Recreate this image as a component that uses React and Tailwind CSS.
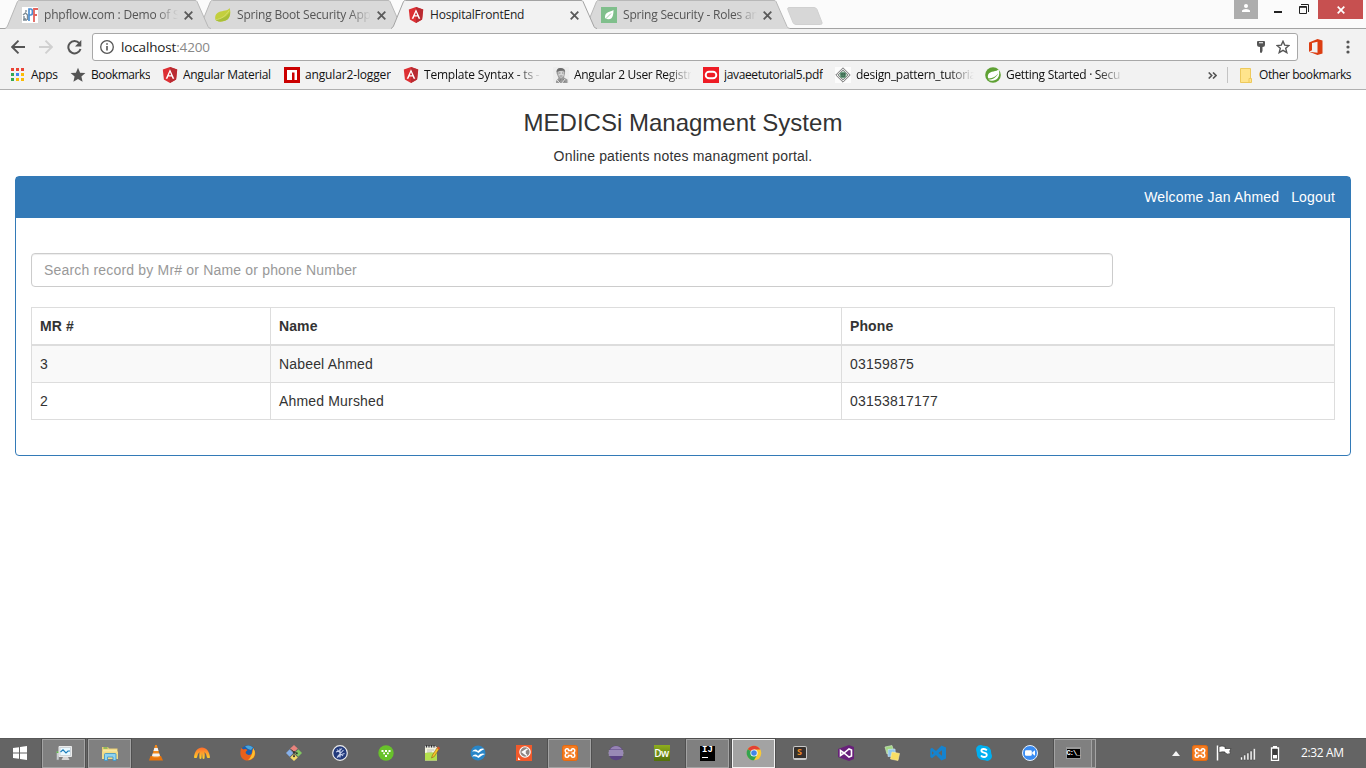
const UI = "font-['Open_Sans','Noto_Sans',sans-serif]";

function Svg({ children, className = "", size = "h-4 w-4", box = "0 0 16 16" }) {
  return (
    <svg viewBox={box} className={"block shrink-0 " + size + " " + className}>
      {children}
    </svg>
  );
}

/* ---------- favicons and browser glyphs ---------- */

const Angular = () => (
  <Svg>
    <path d="M8 0 15.2 2.6 14.1 12.4 8 16 1.9 12.4.8 2.6Z" fill="#dd2f33" />
    <path d="M8 0 15.2 2.6 14.1 12.4 8 16Z" fill="#b92b32" />
    <path d="M8 2.2 3.7 11.8h1.7l.9-2.2h3.4l.9 2.2h1.7ZM8 5.2l1.2 3H6.8Z" fill="#fff" fillRule="evenodd" />
  </Svg>
);

const PhpFlow = () => (
  <Svg>
    <rect width="16" height="16" fill="#fff" />
    <path d="M1 8l2.5-2 2 2v5M2 9v3h2M4 5V3M1 13h4" stroke="#7d8c96" strokeWidth="1.4" fill="none" />
    <path d="M7 14V2h1.800q1.700 0 1.700 3t-1.700 3H7" stroke="#4d8fd0" strokeWidth="1.700" fill="none" />
    <path d="M12 15V2h4M12 8h3" stroke="#e2625c" strokeWidth="1.800" fill="none" />
  </Svg>
);

const Leaf = () => (
  <Svg>
    <path d="M14.500 1C13 4 8 3.500 4 5 1 6.200-.5 9 .4 12.500 2 15 7 15.300 10.500 13.500 15 11.500 16.500 6 14.500 1Z" fill="#c3cf3d" />
    <path d="M.3 12.500C5 12 11 11 14.800 5 15.500 10 13 12.800 10 13.800 6 15.200 2 14.800.3 12.500Z" fill="#a9bf38" />
    <path d="M.5 12.800C6 12 11 9 14 3.500" stroke="#e3e98b" strokeWidth=".6" fill="none" />
  </Svg>
);

const GreenLeaf = () => (
  <Svg>
    <rect width="16" height="16" fill="#80bf8c" />
    <path d="M12.500 3C9 5 4.500 5 4 9.500q-.2 1.500.6 2.300Q11 13.500 12 8q.5-2.500.5-5Z" fill="#fff" />
    <path d="M3.500 13 10 6.500" stroke="#80bf8c" strokeWidth=".8" />
  </Svg>
);

const AppsGrid = () => (
  <Svg>
    {["#ea4335", "#ea4335", "#ea4335", "#34a853", "#4285f4", "#fbbc05", "#34a853", "#fbbc05", "#fbbc05"].map((c, i) => (
      <rect key={i} x={2 + (i % 3) * 5} y={1 + Math.floor(i / 3) * 5} width="3" height="3" fill={c} />
    ))}
  </Svg>
);

const StarSolid = () => (
  <Svg>
    <path d="M8 .8 10.100 5.700 15.400 6.100 11.400 9.600 12.600 14.800 8 12 3.400 14.800 4.600 9.600.6 6.100 5.900 5.700Z" fill="#555" />
  </Svg>
);

const Npm = () => (
  <Svg>
    <rect width="16" height="16" fill="#cb0000" />
    <path d="M3 3h10v10h-2.500V5.500H8V13H3Z" fill="#fff" />
  </Svg>
);

const Avatar = () => (
  <Svg>
    <rect width="16" height="16" fill="#ededed" />
    <path d="M3.500 6Q3 .8 8 1t4 5.500L11 10.500l3.500 2V16H3v-2l2.500-3Z" fill="#9a9a9a" />
    <path d="M3.500 5Q4 .5 8 1t4 4L10.500 3.500 6 4Z" fill="#6d6d6d" />
    <path d="M5 5q3-2 6 0l-.3 4q-2.700 3.500-5 0Z" fill="#d6d6d6" />
    <path d="M5.500 6h2M9 6h1.500M6.500 9h3M8 12l-2 3M10 12l2 3" stroke="#777" strokeWidth=".8" />
    <path d="M4 13l3 3M12 12l-3 4" stroke="#dcdcdc" />
  </Svg>
);

const Oracle = () => (
  <Svg>
    <rect width="16" height="16" fill="#ee1c25" />
    <rect x="2.700" y="4.700" width="10.600" height="6.600" rx="3.300" fill="none" stroke="#fff" strokeWidth="1.900" />
  </Svg>
);

const Diamond = () => (
  <Svg>
    <rect width="16" height="16" fill="#fcfcfc" />
    <path d="M8 .8 15.200 8 8 15.200.8 8Z" fill="#fff" stroke="#666" strokeWidth=".9" />
    <path d="M8 2.800 13.200 8 8 13.200 2.800 8Z" fill="#d7e3db" stroke="#555" strokeWidth=".8" />
    <circle cx="8" cy="8" r="3.300" fill="#6fa384" />
    <path d="M5.500 7h5M6 9.300h4M7 6v3M9.200 6v3" stroke="#2e5741" strokeWidth=".8" />
  </Svg>
);

const Spring = () => (
  <Svg>
    <circle cx="8" cy="8" r="7.800" fill="#5fa134" />
    <path d="M13.600 2.200C12 5 5 3.500 3.200 7.500 2.500 9.300 2.800 10.600 3.600 11.500 8 11 11 9.500 13 6.500 11.500 10.500 8 12.300 3.300 12.800 6 14.500 10.500 14 12.800 11 14.700 8.500 14.500 5 13.600 2.200Z" fill="#fff" />
  </Svg>
);

const Folder = () => (
  <Svg size="h-[15px] w-3" box="0 0 12 15">
    <path d="M.5.500h10V14.500H.5Z" fill="#ffe48c" stroke="#edc95c" />
    <path d="M9 10.500h2.500v4H9Z" fill="#ffe48c" stroke="#edc95c" />
  </Svg>
);

/* ---------- tab strip ---------- */

function Tab({ icon, children, active, layer }) {
  return (
    <div className={"relative -mr-[13px] flex h-[29px] w-[206px] shrink-0 items-center pl-[17px] " + layer}>
      <svg viewBox="0 0 206 29" className="absolute inset-0 h-[29px] w-[206px]">
        <path
          d="M0 29 2 27 12.500 1.500Q13 .5 14.500.500H190Q191.500.500 192 1.500L203 27 206 29Z"
          fill={active ? "#f2f2f2" : "#d9d9d9"}
        />
        <path
          d="M0 28.500 Q1.500 28 2.500 26L12.500 1.500Q13 .5 14.500.500H190Q191.500.500 192 1.500L203 26.500Q204 28.500 206 28.500"
          fill="none"
          stroke={active ? "#a3a3a3" : "#b8b8b8"}
        />
      </svg>
      <div className="relative flex h-full items-center pt-px">
        {icon}
        <div
          className={
            "ml-[6px] w-[134px] overflow-hidden text-[12px] leading-[18px] tracking-[-0.2px] whitespace-nowrap " +
            (active ? "text-[#222]" : "text-[#555] [mask-image:linear-gradient(to_right,black_112px,transparent_134px)]")
          }
        >
          {children}
        </div>
        <Svg className="ml-[6px]" size="h-[9px] w-[9px]" box="0 0 9 9">
          <path d="M.7.700 8.300 8.300M8.300.700.7 8.300" stroke="#5a5a5a" strokeWidth="1.800" />
        </Svg>
      </div>
    </div>
  );
}

function TabStrip() {
  return (
    <div className="relative flex h-[29px] border-b border-[#a3a3a3] bg-[#fbfbfb] pl-[5px]">
      <Tab layer="z-[3]" icon={<PhpFlow />}>phpflow.com : Demo of S</Tab>
      <Tab layer="z-[2]" icon={<Leaf />}>Spring Boot Security App</Tab>
      <Tab layer="z-[4]" icon={<Angular />} active>HospitalFrontEnd</Tab>
      <Tab layer="z-[1]" icon={<GreenLeaf />}>Spring Security - Roles an</Tab>
      <Svg className="mt-[7px] ml-[10px]" size="h-[18px] w-9" box="0 0 36 18">
        <path d="M2 .5H27Q29 .5 30 2.500L35 15.500Q35.500 17.500 33.500 17.500H9Q7 17.500 6 15.500L.8 2.500Q.2.500 2 .5Z" fill="#d7d7d7" stroke="#d0d0d0" />
      </Svg>
      <div className="ml-auto flex h-[19px]">
        <div className="flex w-6 justify-center bg-[#adadad] pt-1">
          <Svg size="h-[8px] w-[8px]" box="0 0 8 8">
            <circle cx="4" cy="2" r="2" fill="#fff" />
            <path d="M0 8V6.500Q1 5 4 5T8 6.500V8Z" fill="#fff" />
          </Svg>
        </div>
        <div className="mt-[11px] ml-4 h-[2px] w-2 bg-[#222]" />
        <Svg className="mt-1 ml-[17px]" size="h-[10px] w-[10px]" box="0 0 10 10">
          <path d="M.5 2.500H7.500V9.500H.5ZM0 3.300H8M2 .5H9.500V8" fill="none" stroke="#222" />
        </Svg>
        <div className="mr-[3px] ml-[9px] flex w-[45px] items-center justify-center bg-[#c75050]">
          <Svg size="h-2 w-2" box="0 0 8 8">
            <path d="M.7.700 7.300 7.300M7.300.700.7 7.300" stroke="#fff" strokeWidth="1.700" />
          </Svg>
        </div>
      </div>
    </div>
  );
}

/* ---------- toolbar and bookmarks ---------- */

function Toolbar() {
  return (
    <div className="flex h-9 items-center pl-[11px]">
      <Svg size="h-[14px] w-[14px]" box="0 0 14 14">
        <path d="M14 7H1.500M7.500.700 1.200 7 7.500 13.300" fill="none" stroke="#555" strokeWidth="1.900" />
      </Svg>
      <Svg className="ml-[14px]" size="h-[14px] w-[14px]" box="0 0 14 14">
        <path d="M0 7H12.500M6.500.700 12.800 7 6.500 13.300" fill="none" stroke="#d0d0d0" strokeWidth="1.900" />
      </Svg>
      <Svg className="ml-[14px]" size="h-[15px] w-[15px]" box="0 0 15 15">
        <path d="M12.300 3.200A6.200 6.200 0 1 0 13.500 9" fill="none" stroke="#555" strokeWidth="2" />
        <path d="M14.300 0V6.500H8Z" fill="#555" />
      </Svg>
      <div className="ml-[10px] flex h-7 w-[1206px] items-center rounded-[3px] border border-[#a8a8a8] bg-white pl-[7px]">
        <Svg size="h-[14px] w-[14px]" box="0 0 14 14">
          <circle cx="7" cy="7" r="6.300" fill="none" stroke="#555" strokeWidth="1.300" />
          <path d="M7 6V10.500M7 3.300V4.800" stroke="#555" strokeWidth="1.600" />
        </Svg>
        <span className="ml-[7px] text-[13.5px] leading-5 tracking-[-0.15px] text-[#222]">
          localhost<span className="text-[#888]">:4200</span>
        </span>
        <Svg className="ml-auto" size="h-3 w-2" box="0 0 8 12">
          <path d="M1 0H7Q8 0 8 1V3.500Q8 6 5.500 6V10L4.500 12 3 11.500V6Q0 6 0 3.500V1Q0 0 1 0ZM2 1.300V2.300H6V1.300Z" fill="#555" fillRule="evenodd" />
        </Svg>
        <Svg className="mr-[7px] ml-[11px]" size="h-[14px] w-[14px]" box="0 0 14 14">
          <path d="M7 1.300 8.700 5.100 13 5.500 9.700 8.300 10.800 12.600 7 10.300 3.200 12.600 4.300 8.300 1 5.500 5.300 5.100Z" fill="none" stroke="#555" strokeWidth="1.400" />
        </Svg>
      </div>
      <Svg className="ml-[11px]" size="h-4 w-[14px]" box="0 0 14 16">
        <path d="M0 3.500 8.500 0 13.500 1.500V14.500L8.500 16 0 12.700 8.500 13.700V2.700L3 4V11.200L0 12.700Z" fill="#dc3e12" />
      </Svg>
      <Svg className="ml-[23px]" size="h-[14px] w-1" box="0 0 4 14">
        <circle cx="2" cy="2" r="1.600" fill="#555" />
        <circle cx="2" cy="7" r="1.600" fill="#555" />
        <circle cx="2" cy="12" r="1.600" fill="#555" />
      </Svg>
    </div>
  );
}

const FADE = "[mask-image:linear-gradient(to_right,black_92px,transparent_118px)]";

function Bookmark({ icon, children, width, label = "tracking-[-0.3px]" }) {
  return (
    <div className={"flex shrink-0 items-center " + width}>
      {icon}
      <div className={"ml-[5px] overflow-hidden whitespace-nowrap " + label}>{children}</div>
    </div>
  );
}

function Bookmarks() {
  return (
    <div className="flex h-6 items-start pl-[9px] text-[12px] leading-[18px] text-[#111]">
      <div className="flex h-5 w-full items-center">
        <Bookmark width="w-[61px]" label="pl-px tracking-[-0.3px]" icon={<AppsGrid />}>Apps</Bookmark>
        <Bookmark width="w-[92px]" label="tracking-[-0.45px]" icon={<StarSolid />}>Bookmarks</Bookmark>
        <Bookmark width="w-[122px]" icon={<Angular />}>Angular Material</Bookmark>
        <Bookmark width="w-[119px]" label="tracking-[-0.15px]" icon={<Npm />}>angular2-logger</Bookmark>
        <Bookmark width="w-[150px]" label={"w-[118px] tracking-[-0.2px] " + FADE} icon={<Angular />}>Template Syntax - ts - </Bookmark>
        <Bookmark width="w-[150px]" label={"w-[117px] tracking-[-0.3px] " + FADE} icon={<Avatar />}>Angular 2 User Registr</Bookmark>
        <Bookmark width="w-[132px]" label="tracking-[-0.35px]" icon={<Oracle />}>javaeetutorial5.pdf</Bookmark>
        <Bookmark width="w-[150px]" label={"w-[118px] tracking-[-0.3px] " + FADE} icon={<Diamond />}>design_pattern_tutoria</Bookmark>
        <Bookmark width="w-[150px]" label={"w-[118px] tracking-[-0.3px] " + FADE} icon={<Spring />}>Getting Started · Secu</Bookmark>
        <Svg className="ml-[73px]" size="h-[7px] w-[9px]" box="0 0 9 7">
          <path d="M.7.500 3.700 3.500.7 6.500M5 .5 8 3.500 5 6.500" fill="none" stroke="#555" strokeWidth="1.600" />
        </Svg>
        <div className="ml-[10px] h-4 w-px bg-[#c4c4c4]" />
        <div className="ml-3 flex items-center">
          <Folder />
          <span className="ml-[7px] tracking-[-0.43px] whitespace-nowrap">Other bookmarks</span>
        </div>
      </div>
    </div>
  );
}

/* ---------- page ---------- */

const PATIENTS = [
  { mr: "3", name: "Nabeel Ahmed", phone: "03159875" },
  { mr: "2", name: "Ahmed Murshed", phone: "03153817177" },
];

function Page() {
  return (
    <main className="flex-1 bg-white px-[15px] pt-5 font-['Liberation_Sans',Arial,sans-serif] text-[14px] leading-5 tracking-[0.17px] text-[#333]">
      <h3 className="mb-[10px] text-center text-[24px] leading-[26px] font-normal tracking-normal">MEDICSi Managment System</h3>
      <p className="mb-[10px] text-center">Online patients notes managment portal.</p>
      <section className="h-[280px] rounded-[4px] border border-[#337ab7] bg-white">
        <header className="flex h-[41px] items-start justify-end gap-3 bg-[#337ab7] px-[15px] pt-[10px] text-white">
          <span>Welcome Jan Ahmed</span>
          <a>Logout</a>
        </header>
        <div className="px-[15px] pt-[35px]">
          <input
            placeholder="Search record by Mr# or Name or phone Number"
            className="block h-[34px] w-[1082px] rounded-[4px] border border-[#ccc] px-3 py-[6px] tracking-[0.18px] shadow-[inset_0_1px_1px_rgba(0,0,0,0.075)] placeholder:text-[#999]"
          />
          <table className="mt-5 w-full table-fixed border-collapse border border-[#ddd]">
            <colgroup>
              <col className="w-[239px]" />
              <col className="w-[571px]" />
              <col />
            </colgroup>
            <thead>
              <tr>
                {["MR #", "Name", "Phone"].map((h) => (
                  <th key={h} className="border border-b-2 border-[#ddd] p-2 text-left font-bold tracking-[0.1px]">{h}</th>
                ))}
              </tr>
            </thead>
            <tbody>
              {PATIENTS.map((p) => (
                <tr key={p.mr} className="odd:bg-[#f9f9f9]">
                  <td className="border border-[#ddd] p-2">{p.mr}</td>
                  <td className="border border-[#ddd] p-2">{p.name}</td>
                  <td className="border border-[#ddd] p-2 tracking-[0.22px]">{p.phone}</td>
                </tr>
              ))}
            </tbody>
          </table>
        </div>
      </section>
    </main>
  );
}

/* ---------- taskbar ---------- */

const Xampp = () => (
  <Svg>
    <rect x=".5" y=".5" width="15" height="15" rx="2" fill="#f47b20" stroke="#e56a10" />
    <path d="M6.500 5.500V4.500Q6 3.500 4.700 3.700 3 4 3.200 5.700 3.300 7.500 5 8 3.300 8.500 3.200 10.300 3 12 4.700 12.300 6 12.500 6.500 11.500V10.500H9.500V11.500Q10 12.500 11.300 12.300 13 12 12.800 10.300 12.700 8.500 11 8 12.700 7.500 12.800 5.700 13 4 11.300 3.700 10 3.500 9.500 4.500V5.500Z" fill="none" stroke="#fff" strokeWidth="1.500" />
  </Svg>
);

const APPS = [
  {
    open: true,
    icon: (
      <Svg>
        <path d="M.5 6.500h2.500v8.500H.5Z" fill="#c9cdd0" stroke="#888" strokeWidth=".6" />
        <path d="M.5 6.500h2.500v1.500H.5Z" fill="#5fbb46" />
        <path d="M3 1.500H15.500V11.500H3Z" fill="#cfd6da" stroke="#ececec" />
        <path d="M4.500 3H14V10H4.500Z" fill="#eaf9ff" />
        <path d="M4.500 7 7 4.800 10 8 12 6H14" fill="none" stroke="#1c7ebc" strokeWidth="1.200" />
        <path d="M7 12h5l1.500 3H5.500Z" fill="#d6d6d6" />
      </Svg>
    ),
  },
  {
    open: true,
    icon: (
      <Svg>
        <path d="M0 2h6l1 1.500h8.500V14H0Z" fill="#e9cd73" />
        <path d="M1.500 2.500h4v1h-4Z" fill="#3fa344" />
        <path d="M1 4.500h14V14H1Z" fill="#f8e7a0" />
        <path d="M0 6.500h16V14H0Z" fill="#f3dc87" />
        <path d="M2.500 9.500Q2.500 8.500 3.500 8.500h9.500q1 0 1 1v6h-3V12H5.500v3.500h-3Z" fill="#8fd3f0" stroke="#3b93c4" strokeWidth=".8" />
      </Svg>
    ),
  },
  {
    icon: (
      <Svg>
        <path d="M2.500 11h10.500l2 4.500H1Z" fill="#e8740c" />
        <path d="M7.200 0h1.600L12.300 12q-4.300 2-8.600 0Z" fill="#f58a1b" />
        <path d="M6.300 3h3.400l.8 3H5.500ZM4.700 8.500h6.600l.7 2.500q-4 1.200-8 0Z" fill="#f3f3f3" />
      </Svg>
    ),
  },
  {
    icon: (
      <Svg>
        <defs>
          <linearGradient id="dome" x1="0" y1="0" x2="0" y2="1">
            <stop offset="0" stopColor="#ff6a2b" />
            <stop offset="1" stopColor="#ffd62b" />
          </linearGradient>
        </defs>
        <path d="M0 12.500C.5 6 4 2.500 8 2.500s7.500 3.500 8 10q-1.500 1-3 0Q12.500 8.500 10.500 7 11 10 10.500 13.500 8.800 14.500 8.500 13L8 8 7.500 13Q7 14.500 5.500 13.500 5 10 5.500 7 3.500 8.500 3 12.500 1.500 13.500 0 12.500Z" fill="url(#dome)" />
      </Svg>
    ),
  },
  {
    icon: (
      <Svg>
        <circle cx="8" cy="7.500" r="7.300" fill="#1c5fae" />
        <path d="M5 1.500Q9-1 13 2.500L11 5 8 4Z" fill="#48a5dc" />
        <path d="M1 3 3.500 4.500Q5.500 3.500 7.500 5L6 6.500Q5 8 7 9.300T11.500 9Q12 6 13 3 17 8 14 12.500 10 17 4.500 15-.5 12.500.5 6Z" fill="#e9601a" />
        <path d="M13.200 3Q16.500 8 13.500 12.500 11.500 14.500 8 15.300 12.500 11 13.200 3Z" fill="#fbc02e" />
      </Svg>
    ),
  },
  {
    icon: (
      <Svg>
        <path d="M8 0 11.800 3.500 8 7.300 4.200 3.500Z" fill="#e9837d" />
        <path d="M12.300 4.200 16 8 12.300 11.800 8.700 8Z" fill="#82c763" />
        <path d="M8 8.700 11.800 12.500 8 16 4.200 12.500Z" fill="#f5dc6a" />
        <path d="M3.700 4.200 7.300 8 3.700 11.800 0 8Z" fill="#86b0ea" />
        <path d="M5.500 4.500 8 7V11.500M8 7 10.500 8" stroke="#3b3b3b" strokeWidth=".8" fill="none" />
        <circle cx="8" cy="7" r="1" fill="#333" />
        <circle cx="10.800" cy="8.200" r="1" fill="#333" />
        <circle cx="8" cy="11.300" r="1" fill="#333" />
      </Svg>
    ),
  },
  {
    icon: (
      <Svg>
        <circle cx="8" cy="8" r="7.300" fill="#223a7c" stroke="#ededed" strokeWidth="1.200" />
        <path d="M8 3.500v9M5 4.500l6 6.500M11.500 5l-6 6.500M4 7Q8 6 10 3.500M5 12.500Q9 9 12.500 8.500" stroke="#c6d0ec" strokeWidth="1.100" fill="none" />
      </Svg>
    ),
  },
  {
    icon: (
      <Svg>
        <circle cx="8" cy="8" r="7.700" fill="#68c22b" />
        <path d="M3.500 5h2v2h-2ZM7 5h2v2H7ZM10.500 5h2v2h-2ZM5.200 7.500h1.800v1.800H5.200ZM9 7.500h1.800v1.800H9ZM7 10h2v2H7Z" fill="#fff" />
      </Svg>
    ),
  },
  {
    icon: (
      <Svg>
        <path d="M1 2h12v13.500H1Z" fill="#f4f4e0" />
        <path d="M1 8Q6 6.500 13 8V15.500H1Z" fill="#b4e04c" />
        <path d="M1 1h11v1.500H1Z" fill="#c9c9c9" />
        <path d="M2.500 0v2.500M5 0v2.500M7.500 0v2.500M10 0v2.500" stroke="#333" />
        <path d="M3 5h7M3 7h5" stroke="#aaa" strokeWidth=".7" />
        <path d="M7.500 13 8.500 10 13.500 2l2 1.500L10.300 11.500Z" fill="#f5c328" stroke="#7b4a16" strokeWidth=".5" />
        <path d="M13 3.300 14.200 1.500 16 3 15 4.800Z" fill="#d34d30" />
      </Svg>
    ),
  },
  {
    icon: (
      <Svg>
        <circle cx="8" cy="8" r="7.500" fill="#2986c8" />
        <path d="M2 6.500Q5 3 8 6 11 2.500 14.500 4 12 5 8.500 8 6 5.500 2 6.500ZM2 11.500Q5 8 8 11 11 7.500 15 9 12 10 8.500 13 6 10.500 2 11.500Z" fill="#fff" />
      </Svg>
    ),
  },
  {
    icon: (
      <Svg>
        <rect width="16" height="16" fill="#f15a2b" />
        <circle cx="9" cy="7" r="5.200" fill="#8f8683" stroke="#fff" strokeWidth="1.100" />
        <path d="M11.500 3.800 6.500 7l4.500 3.500M9 6v3" stroke="#fff" strokeWidth="1.500" fill="none" />
        <path d="M2 12 4.500 15H2Z" fill="#fff" />
      </Svg>
    ),
  },
  { open: true, icon: <Xampp /> },
  {
    icon: (
      <Svg>
        <circle cx="8" cy="8" r="7.300" fill="#5b4383" />
        <path d="M2 4.500Q4 1 8 1t6 3.500Z" fill="#9683b4" />
        <path d="M.8 6H15.200M.5 8H15.500M.8 10H15.200" stroke="#d8d0e8" strokeWidth="1" />
      </Svg>
    ),
  },
  {
    icon: (
      <div className="flex h-4 w-4 items-center justify-center bg-linear-to-b from-[#8fae1e] to-[#54700a] pb-px font-['Open_Sans',sans-serif] text-[10px] leading-none font-semibold tracking-[-0.6px] text-white">Dw</div>
    ),
  },
  {
    open: true,
    icon: (
      <div className="flex h-[15px] w-[15px] flex-col bg-black pl-[2px] font-['Liberation_Mono',monospace] text-[9px] leading-[9px] font-bold text-white">
        IJ
        <span className="mt-[2px] h-px w-[6px] bg-white" />
      </div>
    ),
  },
  {
    current: true,
    icon: (
      <Svg>
        <circle cx="8" cy="8" r="7.300" fill="#f8ca38" />
        <path d="M8 8 1.700 4.300A7.300 7.300 0 0 1 14.300 4.500H8Z" fill="#e34133" />
        <path d="M8 8 1.700 4.300A7.300 7.300 0 0 0 8 15.300L11 10Z" fill="#32a350" />
        <circle cx="8" cy="8" r="3.600" fill="#fff" />
        <circle cx="8" cy="8" r="2.800" fill="#4285e8" />
      </Svg>
    ),
  },
  {
    icon: (
      <div className="flex h-[14px] w-[14px] flex-col items-center rounded-[2px] border border-b-2 border-[#c8c8c8] bg-[#35302d] font-['Open_Sans',sans-serif] text-[9px] leading-[10px] font-bold text-[#f08a24]">S</div>
    ),
  },
  {
    icon: (
      <Svg>
        <path d="M11 0 16 2V14L11 16 0 12V4Z" fill="#68217a" />
        <path d="M2.500 5.500v5L6 8l5 4 2.500-1V5L11 4 6 8Z" fill="none" stroke="#fff" strokeWidth="1.600" />
      </Svg>
    ),
  },
  {
    icon: (
      <Svg>
        <path d="M1 2 8 .5 10 7 3 9Z" fill="#a2d884" stroke="#d5efc6" strokeWidth=".6" />
        <path d="M4 4.500 11 4 11.500 11 4 11.500Z" fill="#8fc6ea" stroke="#d6ebf8" strokeWidth=".6" />
        <path d="M8 7 15.500 8.500 14 15.500 6.500 14Z" fill="#f9df65" stroke="#fff0a5" strokeWidth=".6" />
      </Svg>
    ),
  },
  {
    icon: (
      <Svg>
        <path
          d="M11.500.500 16 2.500V13.500L11.500 15.500 6 10 2 13.300.3 12V4L2 2.700 6 6ZM12 5.200V10.800L8.300 8ZM2 6.200V9.800L4 8Z"
          fill="#1583cf"
          fillRule="evenodd"
        />
      </Svg>
    ),
  },
  {
    icon: (
      <Svg>
        <path d="M4.500 0Q6 0 7 .8 15.500.2 15.300 8.800 17 12 14.500 14.500T9 15.200Q.5 15.500.7 7.200-.5 4 .8 2T4.500 0Z" fill="#00aff0" />
        <path d="M10.800 5.300Q9.500 3.800 7.500 4 5.300 4.200 5.400 5.800 5.500 7.200 8 7.700 10.800 8.200 10.800 10 10.600 12 8 12 6 12 5 10.500" stroke="#fff" strokeWidth="1.800" fill="none" />
      </Svg>
    ),
  },
  {
    icon: (
      <Svg>
        <circle cx="8" cy="8" r="7.500" fill="#3a8cf2" stroke="#e9f2fc" />
        <rect x="3" y="5.300" width="6.800" height="5.500" rx="1.200" fill="#fff" />
        <path d="M10.300 7.300 13 5.300V10.700L10.300 8.800Z" fill="#fff" />
      </Svg>
    ),
  },
];

function Taskbar() {
  return (
    <footer className="flex h-[30px] items-center bg-[#646464] shadow-[inset_0_1px_0_#585858]">
      <div className="flex w-[42px] justify-center pr-[3px]">
        <Svg size="h-[14px] w-[14px]" box="0 0 14 14">
          <path d="M0 2 6 1.200V6.500H0ZM7 1 14 0V6.500H7ZM0 7.500H6V12.800L0 12ZM7 7.500H14V14L7 13Z" fill="#fff" />
        </Svg>
      </div>
      <div className="flex gap-[3px]">
        {APPS.map((a, i) => (
          <div
            key={i}
            className={
              "flex h-[29px] w-[43px] items-center justify-center border " +
              (a.current
                ? "border-[#f2f2f2] bg-[#a3a3a3] shadow-[0_0_0_1px_#505050]"
                : a.open
                  ? "border-[#a3a3a3] bg-[#808080] shadow-[0_0_0_1px_#505050]"
                  : "border-transparent")
            }
          >
            {a.icon}
          </div>
        ))}
        <div className="flex">
          <div className="flex h-[29px] w-[38px] items-center justify-center border border-[#a3a3a3] bg-[#808080] shadow-[0_0_0_1px_#505050]">
            <div className="h-[12px] w-[15px] border border-t-2 border-[#999] bg-black font-['Liberation_Mono',monospace] text-[7px] leading-[9px] font-bold tracking-[-1px] whitespace-nowrap text-white">C:\_</div>
          </div>
          <div className="h-[29px] w-1 border-y border-r border-[#a3a3a3] bg-[#707070]" />
        </div>
      </div>
      <div className="ml-auto flex items-center">
        <Svg className="mr-[12px]" size="h-[5px] w-2" box="0 0 8 5">
          <path d="M4 0 8 5H0Z" fill="#f4f4f4" />
        </Svg>
        <Xampp />
        <Svg className="ml-[8px]">
          <path d="M1.500.500V15.500" stroke="#fff" strokeWidth="1.500" />
          <path d="M3 1.500Q6 .5 9 1.500V3.500H15L13.700 6 14.500 8.500Q11.500 10 9 8V7Q6 6.500 3 7.500Z" fill="#fff" stroke="#383838" strokeWidth=".7" />
        </Svg>
        <Svg className="ml-[8px]">
          <path d="M.5 12h2v3h-2ZM3.700 10h2v5h-2ZM6.900 8h2v7h-2ZM10.100 6h2v9h-2ZM13.300 3.500h2V15h-2Z" fill="#fff" stroke="#444" strokeWidth=".5" />
        </Svg>
        <Svg className="ml-[14px]" size="h-[15px] w-[10px]" box="0 0 10 15">
          <path d="M3 0h4v2H3Z" fill="#fff" />
          <path d="M1.500 2H8.500V14.300H1.500Z" fill="#3c3c3c" stroke="#fff" strokeWidth="1.300" />
          <path d="M3 9H7V12.500H3Z" fill="#fff" />
        </Svg>
        <span className="ml-[21px] w-[65px] text-[12px] leading-[18px] tracking-[-0.35px] whitespace-nowrap text-white">2:32 AM</span>
      </div>
    </footer>
  );
}

export default function App() {
  return (
    <div className={"flex h-[768px] w-[1366px] flex-col overflow-hidden bg-white " + UI}>
      <TabStrip />
      <div className="h-[61px] border-b border-[#b0b0b0] bg-[#f2f2f2]">
        <Toolbar />
        <Bookmarks />
      </div>
      <Page />
      <Taskbar />
    </div>
  );
}
